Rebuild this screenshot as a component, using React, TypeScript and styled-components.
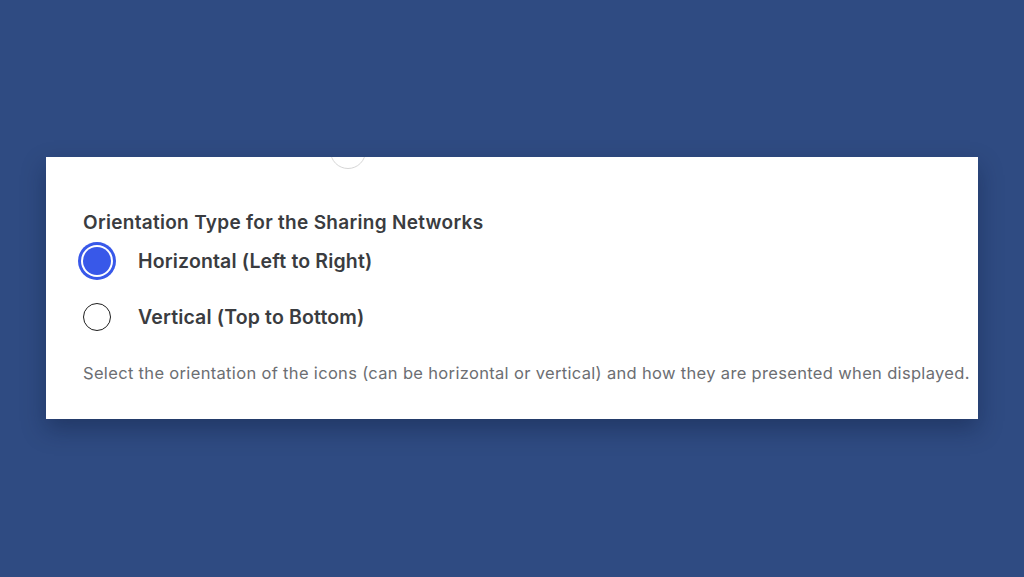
import React, { useState } from "react";
import styled, { createGlobalStyle } from "styled-components";

const Global = createGlobalStyle`
  html, body {
    margin: 0;
    padding: 0;
    background: #2f4b82;
    font-family: Inter, "Noto Sans", "Liberation Sans", sans-serif;
    -webkit-font-smoothing: antialiased;
  }
  #root {
    min-height: 577px;
  }
`;

const Page = styled.div`
  width: 1024px;
  height: 577px;
  padding: 157px 0 0 46px;
  box-sizing: border-box;
`;

const Card = styled.section`
  position: relative;
  overflow: hidden;
  width: 932px;
  height: 262px;
  box-sizing: border-box;
  background: #ffffff;
  padding: 54px 0 0 37px;
  display: flex;
  flex-direction: column;
  box-shadow: 0 10px 22px rgba(10, 20, 50, 0.35);
`;

const Knob = styled.span`
  position: absolute;
  left: 284px;
  top: -24px;
  width: 34px;
  height: 34px;
  border-radius: 50%;
  border: 1.5px solid #d6d6d6;
  background: #fff;
`;

const Heading = styled.h3`
  margin: 0;
  font-size: 19px;
  line-height: 24px;
  font-weight: 600;
  color: #3a3c40;
  letter-spacing: 0.3px;
`;

const Options = styled.div`
  display: flex;
  flex-direction: column;
  gap: 16px;
  margin-top: 6px;
`;

const Option = styled.label`
  display: flex;
  align-items: center;
  height: 40px;
  gap: 27px;
  cursor: pointer;
`;

const Radio = styled.span<{ $checked: boolean }>`
  width: 28px;
  height: 28px;
  box-sizing: border-box;
  border-radius: 50%;
  flex: none;
  border: ${(p) => (p.$checked ? "none" : "1.5px solid #1e1e1e")};
  background: ${(p) => (p.$checked ? "#3858e9" : "#fff")};
  box-shadow: ${(p) =>
    p.$checked ? "0 0 0 2px #ffffff, 0 0 0 5px #3858e9" : "none"};
`;

const LabelText = styled.span`
  font-size: 19.5px;
  font-weight: 600;
  color: #3a3c40;
  line-height: 24px;
  letter-spacing: 0.15px;
`;

const Help = styled.p`
  margin: 24px 0 0;
  font-size: 16.5px;
  line-height: 24px;
  color: #6c6e72;
  font-weight: 400;
  letter-spacing: 0.33px;
`;

const options = [
  { id: "horizontal", label: "Horizontal (Left to Right)" },
  { id: "vertical", label: "Vertical (Top to Bottom)" },
];

export default function App() {
  const [value, setValue] = useState("horizontal");
  return (
    <Page>
      <Global />
      <Card>
        <Knob />
        <Heading>Orientation Type for the Sharing Networks</Heading>
        <Options>
          {options.map((o) => (
            <Option key={o.id} onClick={() => setValue(o.id)}>
              <Radio $checked={value === o.id} />
              <LabelText>{o.label}</LabelText>
            </Option>
          ))}
        </Options>
        <Help>
          Select the orientation of the icons (can be horizontal or vertical) and how they are presented when displayed.
        </Help>
      </Card>
    </Page>
  );
}
